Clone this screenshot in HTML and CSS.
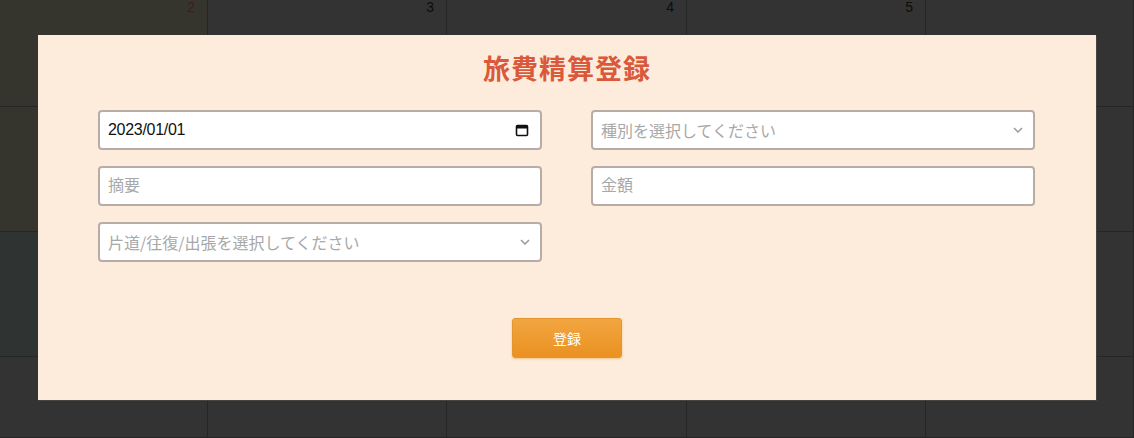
FILE: index.html
```html
<!DOCTYPE html>
<html lang="ja">
<head>
  <meta charset="UTF-8" />
  <meta name="viewport" content="width=device-width, initial-scale=1.0"/>
  <title>旅費精算登録</title>
  <link rel="stylesheet" href="styles.css">
</head>
<body>
<div class="calendar">
  <div class="cell sun top"><span class="day holiday">2</span></div>
  <div class="cell top"><span class="day">3</span></div>
  <div class="cell top"><span class="day">4</span></div>
  <div class="cell top"><span class="day">5</span></div>
  <div class="cell top"></div>

  <div class="cell sun"></div>
  <div class="cell"></div>
  <div class="cell"></div>
  <div class="cell"></div>
  <div class="cell"></div>

  <div class="cell today"></div>
  <div class="cell"></div>
  <div class="cell"></div>
  <div class="cell"></div>
  <div class="cell"></div>

  <div class="cell"></div>
  <div class="cell"></div>
  <div class="cell"></div>
  <div class="cell"></div>
  <div class="cell"></div>
</div>

<div class="modal">
  <h1>旅費精算登録</h1>

  <div class="form-grid">
    <div class="field date-field">
      <span>2023/01/01</span>
      <svg width="14" height="14" viewBox="0 0 14 14">
        <rect x="1.5" y="2.5" width="11" height="10" rx="1" fill="none" stroke="#111" stroke-width="1.6"/>
        <rect x="1.5" y="2.5" width="11" height="3" fill="#111"/>
      </svg>
    </div>

    <div class="field select-field">
      <span class="placeholder">種別を選択してください</span>
      <svg width="10" height="6" viewBox="0 0 10 6"><path d="M1 1l4 4 4-4" fill="none" stroke="#9a9a9a" stroke-width="1.5"/></svg>
    </div>

    <input class="field" type="text" placeholder="摘要">
    <input class="field" type="text" placeholder="金額">

    <div class="field select-field">
      <span class="placeholder">片道/往復/出張を選択してください</span>
      <svg width="10" height="6" viewBox="0 0 10 6"><path d="M1 1l4 4 4-4" fill="none" stroke="#9a9a9a" stroke-width="1.5"/></svg>
    </div>
  </div>

  <div class="actions">
    <button class="submit">登録</button>
  </div>
</div>
</body>
</html>
```

FILE: styles.css
```css
html {
  overflow: hidden;
}

body {
  margin: 0;
  width: 1134px;
  height: 438px;
  overflow: hidden;
  background: #333333;
  font-family: "Liberation Sans", "Noto Sans CJK JP", sans-serif;
  position: relative;
}

.calendar {
  display: grid;
  grid-template-columns: 208px 239px 240px 239px 1fr;
  grid-template-rows: 107px 125px 125px 81px;
}

.cell {
  border-right: 1px solid #262626;
  border-bottom: 1px solid #262626;
  background: #333333;
  display: flex;
  justify-content: flex-end;
  align-items: flex-start;
  padding: 0 12px 0 0;
}

.cell.sun {
  background: #35342d;
}

.cell.today {
  background: #2f3432;
}

.day {
  font-size: 14px;
  line-height: 14px;
  color: #0d0d0d;
}

.day.holiday {
  color: #401d1b;
}

.modal {
  position: absolute;
  left: 38px;
  top: 35px;
  width: 1058px;
  height: 365px;
  box-sizing: border-box;
  padding: 15px 60px 0;
  background: #fdebdb;
  box-shadow: 1px 1px 0 #4a4440;
}

h1 {
  margin: 0;
  text-align: center;
  font-family: "Noto Sans CJK JP", sans-serif;
  font-size: 27px;
  font-weight: 700;
  line-height: 36px;
  color: #d9593a;
  letter-spacing: 1px;
}

.form-grid {
  display: grid;
  grid-template-columns: 444px 444px;
  column-gap: 49px;
  row-gap: 16px;
  margin-top: 24px;
}

.field {
  box-sizing: border-box;
  height: 40px;
  width: 100%;
  border: 2px solid #b8ada6;
  border-radius: 4px;
  background: #ffffff;
  padding: 0 8px;
  font-family: "Liberation Sans", "Noto Sans CJK JP", sans-serif;
  font-size: 16px;
  color: #111;
  display: flex;
  align-items: center;
  justify-content: space-between;
  outline: none;
}

.field::placeholder,
.placeholder {
  color: #a8a8a8;
  font-family: "Noto Sans CJK JP", sans-serif;
}

.date-field span {
  letter-spacing: -0.3px;
}

.date-field svg {
  margin-right: 3px;
}

.select-field svg {
  margin-right: 2px;
}

.actions {
  display: flex;
  justify-content: center;
  margin-top: 56px;
}

.submit {
  width: 110px;
  height: 40px;
  border: 1px solid #e4952e;
  border-radius: 3px;
  background: linear-gradient(to bottom, #f2a640, #ea9122);
  box-shadow: 0 1px 2px rgba(230, 160, 60, 0.5);
  color: #fff;
  font-family: "Noto Sans CJK JP", sans-serif;
  font-size: 14px;
  cursor: pointer;
}
```
